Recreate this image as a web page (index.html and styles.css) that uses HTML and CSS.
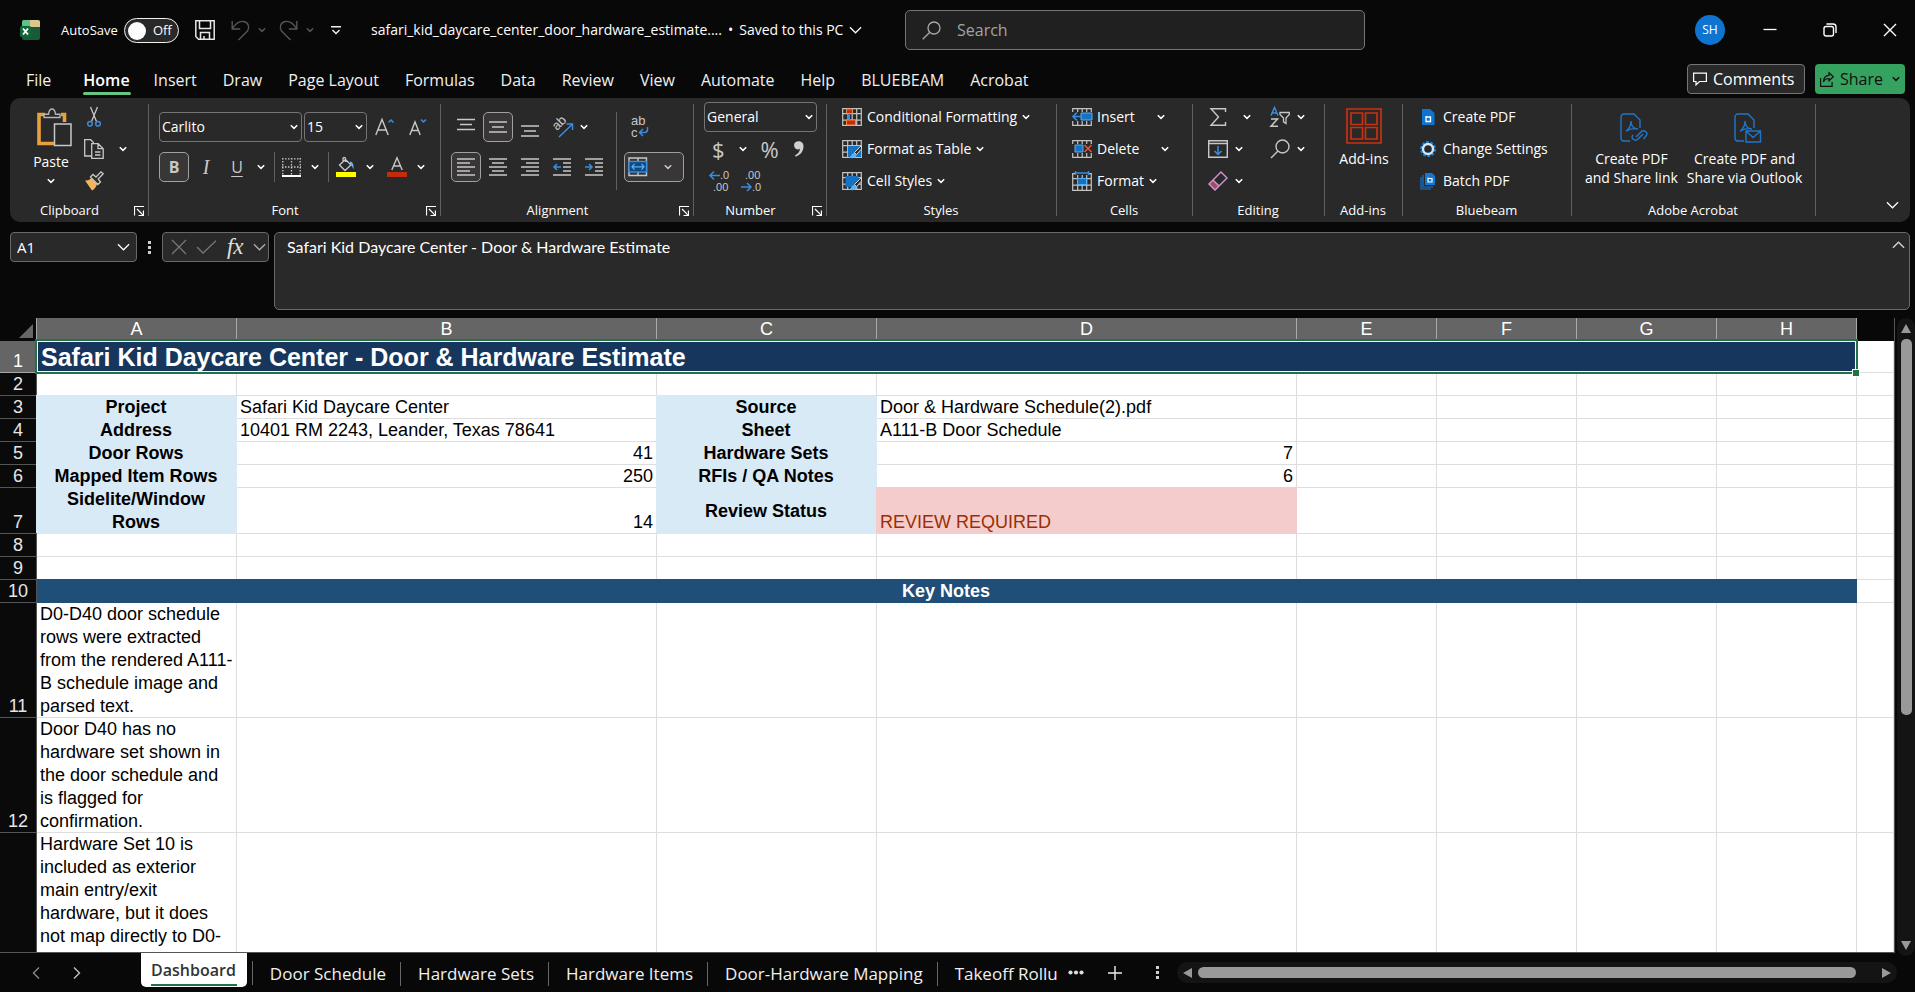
FILE: index.html
```html
<!DOCTYPE html>
<html lang="en">
<head>
<meta charset="utf-8">
<title>safari_kid_daycare_center_door_hardware_estimate</title>
<link rel="stylesheet" href="styles.css">
</head>
<body>
<svg class="defs" aria-hidden="true">
  <symbol id="chev" viewBox="0 0 8 6"><path d="M.8 1.2 4 4.4 7.2 1.2" fill="none" stroke="currentColor" stroke-width="1.5"/></symbol>
  <symbol id="chev-l" viewBox="0 0 14 8"><path d="M1 1l6 6 6-6" fill="none" stroke="currentColor" stroke-width="1.3"/></symbol>
  <symbol id="launch" viewBox="0 0 10 10"><path d="M.5 9.500V.5H10M3 3l6 6M9.400 4.500v5H4.500" fill="none" stroke="currentColor" stroke-width="1.200"/></symbol>
  <symbol id="grid" viewBox="0 0 20 18"><path d="M.7.7h18.600v16.600H.7zM.7 5.700h18.600M.7 12.200h18.600M5.700.7v16.600M10.200.7v16.600M14.700.7v16.600" fill="none" stroke="#c4c4c4" stroke-width="1.200"/></symbol>
  <symbol id="brush" viewBox="0 0 14 14"><path d="M13.500.5 6.500 7.500l2 2L13.500 4z" fill="#292929" stroke="#d6d6d6"/><path d="M6.300 8c-3 0-2.300 3.500-5.800 4.500 3 1.500 8 1 8-2.500z" fill="#5fb2f2"/></symbol>
  <symbol id="pdf" viewBox="0 0 24 30"><path d="M10 28H4a3 3 0 0 1-3-3V4a3 3 0 0 1 3-3h10l6 6v8M6 18c3-2 5-6 5-10 0 5 3 8 7 8-4-1-8 0-12 2z" fill="none" stroke="#2176c7" stroke-width="1.400"/></symbol>
</svg>

<header class="titlebar">
  <div class="title-left">
    <svg class="logo" width="20" height="20" viewBox="0 0 20 20"><rect x="2" width="18" height="20" rx="2" fill="#185c37"/><path d="M4 0h7v7H2V2a2 2 0 0 1 2-2z" fill="#5fc389"/><path d="M10 0h8a2 2 0 0 1 2 2v5H10z" fill="#d9c78c"/><rect y="6" width="11" height="11" rx="1.500" fill="#11673a"/><path d="M3 8.500l5 6M8 8.500l-5 6" stroke="#fff" stroke-width="1.900"/></svg>
    <label class="autosave" for="autosave">AutoSave</label>
    <span class="toggle"><input type="checkbox" id="autosave"><span class="toggle-text">Off</span></span>
    <button class="plain save" aria-label="Save"><svg width="20" height="20" viewBox="0 0 20 20"><path d="M.8.8h18.400v18.400H3.500L.8 16.500zM4.500.8v7.700h11V.8M5.500 19.200v-6.700h9v6.700M9 19v-3" fill="none" stroke="#e6e6e6" stroke-width="1.500"/></svg></button>
    <button class="plain dim undo" aria-label="Undo"><svg width="19" height="21" viewBox="0 0 19 21"><path d="M1.200 1v8h8M1.500 8.500C5 3 9 1 12.500 1.500c5 .8 6.500 6 4 9.500L7.500 20" fill="none" stroke="currentColor" stroke-width="1.400"/></svg><svg width="8" height="6"><use href="#chev"/></svg></button>
    <button class="plain dim redo" aria-label="Redo"><svg width="19" height="21" viewBox="0 0 19 21"><path d="M17.800 1v8h-8M17.500 8.500C14 3 10 1 6.500 1.500c-5 .8-6.500 6-4 9.500l9 9" fill="none" stroke="currentColor" stroke-width="1.400"/></svg><svg width="8" height="6"><use href="#chev"/></svg></button>
    <button class="plain custom" aria-label="Customize toolbar"><svg width="10" height="9" viewBox="0 0 10 9"><path d="M0 .8h10M1.500 4 5 7.500 8.500 4" fill="none" stroke="#f2f2f2" stroke-width="1.400"/></svg></button>
    <button class="plain filename"><span>safari_kid_daycare_center_door_hardware_estimate....</span><span>•</span><span>Saved to this PC</span><svg width="13" height="8"><use href="#chev-l"/></svg></button>
  </div>
  <label class="search"><svg width="19" height="19" viewBox="0 0 19 19"><circle cx="12" cy="7" r="6" fill="none" stroke="#a8a8a8" stroke-width="1.300"/><path d="M7.800 11.200.7 18.300" stroke="#a8a8a8" stroke-width="1.300"/></svg><input type="search" placeholder="Search" aria-label="Search"></label>
  <div class="title-right">
    <button class="plain avatar">SH</button>
    <button class="plain win" aria-label="Minimize"><svg width="14" height="14" viewBox="0 0 14 14"><path d="M.5 6.500h13" stroke="#fff" stroke-width="1.300"/></svg></button>
    <button class="plain win" aria-label="Restore"><svg width="14" height="14" viewBox="0 0 14 14"><rect x="1" y="3.500" width="9.500" height="9.500" rx="2" fill="none" stroke="#fff" stroke-width="1.400"/><path d="M3.500 1h6.500a3 3 0 0 1 3 3v6" fill="none" stroke="#fff" stroke-width="1.400"/></svg></button>
    <button class="plain win" aria-label="Close"><svg width="14" height="14" viewBox="0 0 14 14"><path d="M1 1l12 12M13 1 1 13" stroke="#fff" stroke-width="1.400"/></svg></button>
  </div>
</header>

<nav class="tabs">
  <button>File</button><button class="on">Home</button><button>Insert</button><button>Draw</button><button>Page Layout</button><button>Formulas</button><button>Data</button><button>Review</button><button>View</button><button>Automate</button><button>Help</button><button>BLUEBEAM</button><button>Acrobat</button>
  <div class="tab-actions">
    <button class="comments"><svg width="14" height="14" viewBox="0 0 14 14"><path d="M.6 1.200h12.800v8.300H6.500L3 12.800V9.500H.6z" fill="none" stroke="#fff" stroke-width="1.200"/></svg>Comments</button>
    <button class="share"><svg width="14" height="15" viewBox="0 0 14 15"><path d="M.6 6v8.300h11.500V10M9 .8l4.300 4L9 8.800V6.500c-3 0-4.500 1-5.500 3.500C3.500 6 5.500 3.300 9 3.300z" fill="none" stroke="#111" stroke-width="1.200"/></svg>Share<svg width="8" height="6"><use href="#chev"/></svg></button>
  </div>
</nav>

<section class="ribbon">
  <div class="group g-clip">
    <div class="body">
      <button class="plain paste"><svg width="35" height="39" viewBox="0 0 35 39"><path d="M8 6.500H2v29h15M24 6.500h3.500V14" fill="none" stroke="#e9a13b" stroke-width="3.600"/><path d="M7 9.500V6.200h4.500C12 2.500 13.500 1 15 1s3 1.500 3.500 5.200H23v3.300z" fill="#292929" stroke="#b5b5b5" stroke-width="1.400"/><rect x="17.500" y="16" width="16.500" height="21.500" fill="#292929" stroke="#c8c8c8" stroke-width="1.500"/></svg><span>Paste</span><svg width="8" height="6"><use href="#chev"/></svg></button>
      <div class="rows">
        <button class="plain row" aria-label="Cut"><svg width="20" height="20" viewBox="0 0 20 20"><path d="M6.500 0l6 14.500M13.500 0l-6 14.500" stroke="#c8c8c8" stroke-width="1.300"/><g fill="none" stroke="#3a8de0" stroke-width="1.500"><circle cx="6" cy="16.800" r="2.300"/><circle cx="14" cy="16.800" r="2.300"/></g></svg></button>
        <button class="plain row copy" aria-label="Copy"><svg width="20" height="20" viewBox="0 0 20 20"><path d="M8 17H.7V.7h6l3 3M7.700 4.700h6.500l5 5v9.600H7.700zM14 4.700v5h5M11 13h5.500M11 16h5.500" fill="none" stroke="#c8c8c8" stroke-width="1.300"/></svg><svg width="8" height="6"><use href="#chev"/></svg></button>
        <button class="plain row" aria-label="Format painter"><svg width="20" height="20" viewBox="0 0 20 20"><path d="M1 9.500c3 .5 5-1 6-2.500l6 6c-1 3-2.500 5.500-5 6.500z" fill="#f2b45c"/><path d="M6.500 6 9 3.500l3 2.500L17 .8l2.200 2-5 5.200 2.300 3-2.700 2.500z" fill="#292929" stroke="#c8c8c8" stroke-width="1.300"/></svg></button>
      </div>
    </div>
    <div class="foot launch"><span>Clipboard</span><svg width="10" height="10"><use href="#launch"/></svg></div>
  </div>

  <div class="group g-font">
    <div class="body two">
      <div class="line">
        <span class="combo name"><select aria-label="Font"><option>Carlito</option></select><svg width="8" height="6"><use href="#chev"/></svg></span>
        <span class="combo size"><select aria-label="Font size"><option>15</option></select><svg width="8" height="6"><use href="#chev"/></svg></span>
        <button class="plain grow" aria-label="Increase font size"><svg width="20" height="18" viewBox="0 0 20 18"><path d="M.8 17 7 1.500 13.200 17M3 12h8" fill="none" stroke="#c8c8c8" stroke-width="1.400"/><path d="M13.500 4.500 16 2l2.500 2.500" fill="none" stroke="#3a8de0" stroke-width="1.500"/></svg></button>
        <button class="plain shrink" aria-label="Decrease font size"><svg width="18" height="18" viewBox="0 0 18 18"><path d="M.8 17 6 4l5.200 13M2.800 12.500h6.500" fill="none" stroke="#c8c8c8" stroke-width="1.400"/><path d="M12 1.500 14.500 4 17 1.500" fill="none" stroke="#3a8de0" stroke-width="1.500"/></svg></button>
      </div>
      <div class="line fmt">
        <button class="tool on b">B</button>
        <button class="tool i">I</button>
        <button class="tool u">U</button><svg class="c1" width="8" height="6"><use href="#chev"/></svg>
        <i class="vsep"></i>
        <button class="plain" aria-label="Borders"><svg width="19" height="19" viewBox="0 0 19 19"><path d="M.8 0v17M18.200 0v17M9.500 0v17M0 .8h19M0 9h19" stroke="#c8c8c8" stroke-width="1.300" stroke-dasharray="1.500 1.500"/><path d="M0 18h19" stroke="#fff" stroke-width="2"/></svg></button><svg class="c2" width="8" height="6"><use href="#chev"/></svg>
        <i class="vsep"></i>
        <button class="plain" aria-label="Fill color"><svg width="20" height="20" viewBox="0 0 20 20"><rect y="15" width="20" height="5" fill="#ff0"/><path d="M9.500 2.500 15 8l-6 5.500L3.500 8zM9.500 5V1.500C9.500 0 7 0 7 1.500V5" fill="none" stroke="#c8c8c8" stroke-width="1.300"/><path d="M14 4.500c3 .5 4 3.500 3.500 8-1-2-1-4-3.500-5z" fill="#6cb4f0"/></svg></button><svg class="c2" width="8" height="6"><use href="#chev"/></svg>
        <button class="plain fc" aria-label="Font color"><svg width="20" height="20" viewBox="0 0 20 20"><rect y="15" width="20" height="5" fill="#c42b0c"/><path d="M4.800 13 10 .8 15.200 13M6.500 9h7" fill="none" stroke="#c8c8c8" stroke-width="1.400"/></svg></button><svg class="c2" width="8" height="6"><use href="#chev"/></svg>
      </div>
    </div>
    <div class="foot launch"><span>Font</span><svg width="10" height="10"><use href="#launch"/></svg></div>
  </div>

  <div class="group g-align">
    <div class="body two">
      <div class="alignrow">
        <div class="alignset">
          <button class="tool" aria-label="Top align"><svg width="18" height="20" viewBox="0 0 18 20"><path d="M0 2.500h18M3 7.500h12M0 12.500h18" stroke="#c8c8c8" stroke-width="1.400"/></svg></button>
          <button class="tool on" aria-label="Middle align"><svg width="18" height="20" viewBox="0 0 18 20"><path d="M0 5h18M3 10h12M0 15h18" stroke="#c8c8c8" stroke-width="1.400"/></svg></button>
          <button class="tool" aria-label="Bottom align"><svg width="18" height="20" viewBox="0 0 18 20"><path d="M0 9h18M3 14h12M0 19h18" stroke="#c8c8c8" stroke-width="1.400"/></svg></button>
          <button class="tool" aria-label="Orientation"><svg width="26" height="26" viewBox="0 0 26 26"><text x="0" y="0" transform="translate(8 17) rotate(-45)" class="ab">ab</text><path d="M10 23 23 10.500M17.500 10h6v6" fill="none" stroke="#3a8de0" stroke-width="1.500"/></svg></button><svg class="c3" width="8" height="6"><use href="#chev"/></svg>
          <button class="tool on" aria-label="Align left"><svg width="18" height="18" viewBox="0 0 18 18"><path d="M0 1h18M0 5h13M0 9h18M0 13h13M0 17h18" stroke="#c8c8c8" stroke-width="1.400"/></svg></button>
          <button class="tool" aria-label="Center"><svg width="18" height="18" viewBox="0 0 18 18"><path d="M0 1h18M3 5h12M0 9h18M3 13h12M0 17h18" stroke="#c8c8c8" stroke-width="1.400"/></svg></button>
          <button class="tool" aria-label="Align right"><svg width="18" height="18" viewBox="0 0 18 18"><path d="M0 1h18M5 5h13M0 9h18M5 13h13M0 17h18" stroke="#c8c8c8" stroke-width="1.400"/></svg></button>
          <button class="tool" aria-label="Decrease indent"><svg width="18" height="18" viewBox="0 0 18 18"><path d="M0 1h18M10 5h8M10 9h8M10 13h8M0 17h18" stroke="#c8c8c8" stroke-width="1.400"/><path d="M8 9H1M4 6 1 9l3 3" fill="none" stroke="#3a8de0" stroke-width="1.500"/></svg></button>
          <button class="tool" aria-label="Increase indent"><svg width="18" height="18" viewBox="0 0 18 18"><path d="M0 1h18M10 5h8M10 9h8M10 13h8M0 17h18" stroke="#c8c8c8" stroke-width="1.400"/><path d="M0 9h7M4 6l3 3-3 3" fill="none" stroke="#3a8de0" stroke-width="1.500"/></svg></button>
        </div>
        <i class="vsep tall"></i>
        <div class="wrapset">
          <button class="tool" aria-label="Wrap text"><svg width="20" height="26" viewBox="0 0 20 26"><text x="2" y="11" class="ab">ab</text><text x="2" y="23" class="ab">c</text><path d="M18.500 13v2.500c0 2-1 3-3 3h-5M14 15l-3.500 3.500L14 22" fill="none" stroke="#3a8de0" stroke-width="1.500"/></svg></button>
          <button class="tool on merge" aria-label="Merge and center"><svg width="20" height="20" viewBox="0 0 20 20"><path d="M1 1h17.500v17.500H1zM10 1v4M10 15v4" fill="none" stroke="#c8c8c8" stroke-width="1.400"/><rect x="1" y="4.500" width="17.500" height="10.500" fill="#10497e" stroke="#3a8de0" stroke-width="1.400"/><path d="M4 9.800h12M6.500 7 4 9.800l2.500 2.800M13.500 7 16 9.800l-2.500 2.800" fill="none" stroke="#58aef5" stroke-width="1.300"/></svg><svg width="8" height="6"><use href="#chev"/></svg></button>
        </div>
      </div>
    </div>
    <div class="foot launch"><span>Alignment</span><svg width="10" height="10"><use href="#launch"/></svg></div>
  </div>

  <div class="group g-num">
    <div class="rows">
      <div class="row"><span class="combo num"><select aria-label="Number format"><option>General</option></select><svg width="8" height="6"><use href="#chev"/></svg></span></div>
      <div class="row nums"><button class="plain glyph">$</button><svg width="8" height="6"><use href="#chev"/></svg><button class="plain glyph">%</button><button class="plain" aria-label="Comma style"><svg width="12" height="18" viewBox="0 0 12 18"><path d="M10.500 6C10.500-.5 1 0 1 5c0 4.500 5 5.500 6 3.500 0 3-2 5-5 7l.8 1.200C8 14.500 10.500 11 10.500 6z" fill="#d0d0d0"/></svg></button></div>
      <div class="row decs"><button class="plain" aria-label="Increase decimal"><svg width="21" height="26" viewBox="0 0 21 26"><text x="11" y="11" class="dec">.0</text><text x="4" y="23" class="dec">.00</text><path d="M11 7.500H1M5 3.500l-4 4 4 4" fill="none" stroke="#3a8de0" stroke-width="1.500"/></svg></button><button class="plain" aria-label="Decrease decimal"><svg width="21" height="26" viewBox="0 0 21 26"><text x="4" y="11" class="dec">.00</text><text x="11" y="23" class="dec">.0</text><path d="M0 19h10M6 15l4 4-4 4" fill="none" stroke="#3a8de0" stroke-width="1.500"/></svg></button></div>
    </div>
    <div class="foot launch"><span>Number</span><svg width="10" height="10"><use href="#launch"/></svg></div>
  </div>

  <div class="group g-styles">
    <div class="rows">
      <button class="plain row cmd"><svg width="20" height="18" viewBox="0 0 20 18"><use href="#grid"/><path d="M4.500 1h6v4.500h-6zM4.500 12h9v5h-9z" fill="#c42b0c" stroke="#f08a4b"/><path d="M5 6.500h3v5H5z" fill="#3a8de0"/></svg><span>Conditional Formatting</span><svg width="8" height="6"><use href="#chev"/></svg></button>
      <button class="plain row cmd"><svg width="20" height="19" viewBox="0 0 20 19"><use href="#grid" height="18"/><path d="M6 6h13v11H6z" fill="#1673c4"/><use href="#brush" x="6" y="5" width="14" height="14"/></svg><span>Format as Table</span><svg width="8" height="6"><use href="#chev"/></svg></button>
      <button class="plain row cmd"><svg width="20" height="19" viewBox="0 0 20 19"><use href="#grid" height="18"/><path d="M3.500 4h13v11h-13z" fill="#1673c4"/><use href="#brush" x="6" y="5" width="14" height="14"/></svg><span>Cell Styles</span><svg width="8" height="6"><use href="#chev"/></svg></button>
    </div>
    <div class="foot"><span>Styles</span></div>
  </div>

  <div class="group g-cells">
    <div class="rows">
      <button class="plain row cmd split"><svg width="20" height="18" viewBox="0 0 20 18"><use href="#grid"/><path d="M0 4h20v9H0z" fill="#292929"/><path d="M9 5h11v7H9z" fill="#1673c4" stroke="#58aef5"/><path d="M9 8.500H1M5 4.500l-4 4 4 4" fill="none" stroke="#3a8de0" stroke-width="1.600"/></svg><span>Insert</span><svg width="8" height="6"><use href="#chev"/></svg></button>
      <button class="plain row cmd split"><svg width="20" height="18" viewBox="0 0 20 18"><use href="#grid"/><path d="M0 4h20v9H0z" fill="#292929"/><path d="M3 5h8v7H3z" fill="#1673c4" stroke="#58aef5"/><path d="M12.500 5l7 7M19.500 5l-7 7" stroke="#e8532b" stroke-width="1.700"/></svg><span>Delete</span><svg width="8" height="6"><use href="#chev"/></svg></button>
      <button class="plain row cmd"><svg width="20" height="20" viewBox="0 0 20 20"><use href="#grid" y="2" height="18"/><path d="M3 0h14v4H3z" fill="#292929"/><path d="M5.500 7.500h9v6h-9z" fill="#1673c4" stroke="#58aef5"/><path d="M3.500 0v4M16.500 0v4M3.500 2h13" stroke="#3a8de0" stroke-width="1.400"/></svg><span>Format</span><svg width="8" height="6"><use href="#chev"/></svg></button>
    </div>
    <div class="foot"><span>Cells</span></div>
  </div>

  <div class="group g-edit">
    <div class="editcols">
      <div class="rows">
        <button class="plain row sum" aria-label="AutoSum"><svg width="20" height="18" viewBox="0 0 20 18"><path d="M17.500 4V.8H3L10.500 9 3 17.200h14.500V14" fill="none" stroke="#c8c8c8" stroke-width="1.400"/></svg><svg width="8" height="6"><use href="#chev"/></svg></button>
        <button class="plain row" aria-label="Fill"><svg width="20" height="18" viewBox="0 0 20 18"><path d="M.7.7h18.600v16.600H.7zM.7 3.500h18.600" fill="none" stroke="#c8c8c8" stroke-width="1.400"/><path d="M10 6v8.500M6.500 11l3.500 3.500 3.500-3.500" fill="none" stroke="#3a8de0" stroke-width="1.500"/></svg><svg width="8" height="6"><use href="#chev"/></svg></button>
        <button class="plain row" aria-label="Clear"><svg width="20" height="20" viewBox="0 0 20 20"><path d="M1 13.500 5.500 9l6 6L7 19.500z" fill="#9c4f5e"/><path d="M13 1 19 7 7 19 1 13zM5 9l6 6" fill="none" stroke="#d596d5" stroke-width="1.400"/></svg><svg width="8" height="6"><use href="#chev"/></svg></button>
      </div>
      <div class="rows">
        <button class="plain row" aria-label="Sort and filter"><svg width="20" height="20" viewBox="0 0 20 20"><path d="M1 8.500 4.500.5 8 8.500M2.300 6h4.500" fill="none" stroke="#3a8de0" stroke-width="1.500"/><path d="M1 12h6.500L1 19.200h7" fill="none" stroke="#c8c8c8" stroke-width="1.500"/><path d="M10 5.500h9.300v2L16 11v5.500l-2.500-1.700V11L10 7.500z" fill="none" stroke="#c8c8c8" stroke-width="1.300"/></svg><svg width="8" height="6"><use href="#chev"/></svg></button>
        <button class="plain row" aria-label="Find and select"><svg width="20" height="20" viewBox="0 0 20 20"><circle cx="12.500" cy="7.500" r="6.500" fill="none" stroke="#c8c8c8" stroke-width="1.400"/><path d="M8 12 1 19" stroke="#c8c8c8" stroke-width="1.400"/></svg><svg width="8" height="6"><use href="#chev"/></svg></button>
      </div>
    </div>
    <div class="foot"><span>Editing</span></div>
  </div>

  <div class="group g-add">
    <button class="plain big"><svg width="36" height="36" viewBox="0 0 36 36"><path d="M1 1h34v34H1zM5 5h11.500v11.500H5zM19.500 5H31v11.500H19.500zM5 19.500h11.500V31H5zM19.500 19.500H31V31H19.500z" fill="none" stroke="#c9300f" stroke-width="1.700"/></svg><span>Add-ins</span></button>
    <div class="foot"><span>Add-ins</span></div>
  </div>

  <div class="group g-blue">
    <div class="rows">
      <button class="plain row cmd"><svg width="16" height="18" viewBox="0 0 16 18"><path d="M2 1h8l4.500 4v12H2z" fill="#0f74d0"/><path d="M6 8v5.500h4.500V9H6z" fill="none" stroke="#fff" stroke-width="1.300"/></svg><span>Create PDF</span></button>
      <button class="plain row cmd"><svg width="16" height="18" viewBox="0 0 16 18"><circle cx="8" cy="9" r="7" fill="none" stroke="#1883e0" stroke-width="2" stroke-dasharray="2.800 1.600"/><circle cx="8" cy="9" r="5" fill="none" stroke="#cfe6fb" stroke-width="2.400"/></svg><span>Change Settings</span></button>
      <button class="plain row cmd"><svg width="16" height="18" viewBox="0 0 16 18"><path d="M5 1h7l3 3v9H5z" fill="#1278d4"/><path d="M3 3v12h10M1 5v12h10" fill="none" stroke="#1278d4" stroke-width="1.200"/><path d="M8 5.500V10h4V6.500H8z" fill="none" stroke="#fff" stroke-width="1.200"/></svg><span>Batch PDF</span></button>
    </div>
    <div class="foot"><span>Bluebeam</span></div>
  </div>

  <div class="group g-acro">
    <div class="body acro">
      <button class="plain big"><svg width="28" height="30" viewBox="0 0 28 30"><use href="#pdf" width="24" height="30"/><path d="M15 22l5-5c3-3 8 1 5 4l-2.500 3M22 19l-5 5c-3 3-8-1-5-4" transform="translate(1 2)" fill="none" stroke="#2176c7" stroke-width="1.500"/></svg><span>Create PDF<br>and Share link</span></button>
      <button class="plain big"><svg width="28" height="30" viewBox="0 0 28 30"><use href="#pdf" width="24" height="30"/><path d="M12 18h14.500v11H12zM12 18l7 6.500 7.500-6.500" fill="#292929" stroke="#2176c7" stroke-width="1.400"/></svg><span>Create PDF and<br>Share via Outlook</span></button>
    </div>
    <div class="foot"><span>Adobe Acrobat</span></div>
  </div>
  <button class="plain collapse" aria-label="Collapse ribbon"><svg width="13" height="8"><use href="#chev-l"/></svg></button>
</section>

<section class="formula">
  <label class="namebox"><input type="text" value="A1" aria-label="Name box"><svg width="13" height="8"><use href="#chev-l"/></svg></label>
  <span class="dots3"></span>
  <div class="fxbox">
    <button class="plain dim2" aria-label="Cancel"><svg width="16" height="16" viewBox="0 0 16 16"><path d="M1 1l14 14M15 1 1 15" stroke="currentColor" stroke-width="1.300"/></svg></button>
    <button class="plain dim2" aria-label="Enter"><svg width="21" height="14" viewBox="0 0 21 14"><path d="M1 7l6 6L20 .8" fill="none" stroke="currentColor" stroke-width="1.300"/></svg></button>
    <button class="plain fx">fx</button>
    <svg width="13" height="8"><use href="#chev-l"/></svg>
  </div>
  <div class="fbar"><textarea aria-label="Formula bar">Safari Kid Daycare Center - Door &amp; Hardware Estimate</textarea><svg width="13" height="8" viewBox="0 0 14 8"><path d="M1 7l6-6 6 6" fill="none" stroke="#d0d0d0" stroke-width="1.500"/></svg></div>
</section>

<main class="work">
  <div class="sheet">
    <table>
      <colgroup><col class="c-row"><col class="c-a"><col class="c-wide"><col class="c-c"><col class="c-wide"><col class="c-n"><col class="c-n"><col class="c-n"><col class="c-n"><col></colgroup>
      <thead><tr><th class="corner"><svg width="14" height="14" viewBox="0 0 14 14"><path d="M14 0v14H0z" fill="#666"/></svg></th><th>A</th><th>B</th><th>C</th><th>D</th><th>E</th><th>F</th><th>G</th><th>H</th><th class="out"></th></tr></thead>
      <tbody>
        <tr class="r1"><th class="sel">1</th><td class="title" colspan="8">Safari Kid Daycare Center - Door &amp; Hardware Estimate<span class="frame"></span><span class="handle"></span></td><td></td></tr>
        <tr><th>2</th><td></td><td></td><td></td><td></td><td></td><td></td><td></td><td></td><td></td></tr>
        <tr><th>3</th><td class="lab">Project</td><td>Safari Kid Daycare Center</td><td class="lab">Source</td><td>Door &amp; Hardware Schedule(2).pdf</td><td></td><td></td><td></td><td></td><td></td></tr>
        <tr><th>4</th><td class="lab">Address</td><td>10401 RM 2243, Leander, Texas 78641</td><td class="lab">Sheet</td><td>A111-B Door Schedule</td><td></td><td></td><td></td><td></td><td></td></tr>
        <tr><th>5</th><td class="lab">Door Rows</td><td class="n">41</td><td class="lab">Hardware Sets</td><td class="n">7</td><td></td><td></td><td></td><td></td><td></td></tr>
        <tr><th>6</th><td class="lab">Mapped Item Rows</td><td class="n">250</td><td class="lab">RFIs / QA Notes</td><td class="n">6</td><td></td><td></td><td></td><td></td><td></td></tr>
        <tr><th>7</th><td class="lab">Sidelite/Window<br>Rows</td><td class="n">14</td><td class="lab">Review Status</td><td class="warn">REVIEW REQUIRED</td><td></td><td></td><td></td><td></td><td></td></tr>
        <tr><th>8</th><td></td><td></td><td></td><td></td><td></td><td></td><td></td><td></td><td></td></tr>
        <tr><th>9</th><td></td><td></td><td></td><td></td><td></td><td></td><td></td><td></td><td></td></tr>
        <tr><th>10</th><td class="key" colspan="8">Key Notes</td><td></td></tr>
        <tr><th>11</th><td>D0-D40 door schedule rows were extracted from the rendered A111-B schedule image and parsed text.</td><td></td><td></td><td></td><td></td><td></td><td></td><td></td><td></td></tr>
        <tr><th>12</th><td>Door D40 has no hardware set shown in the door schedule and is flagged for confirmation.</td><td></td><td></td><td></td><td></td><td></td><td></td><td></td><td></td></tr>
        <tr class="r13"><th></th><td>Hardware Set 10 is included as exterior main entry/exit hardware, but it does not map directly to D0-</td><td></td><td></td><td></td><td></td><td></td><td></td><td></td><td></td></tr>
      </tbody>
    </table>
  </div>
  <div class="vscroll"><i class="arr up"></i><i class="thumb"></i><i class="arr down"></i></div>
</main>

<footer class="bottom">
  <div class="sheetnav">
    <button class="plain dimnav" aria-label="Previous sheet"><svg width="8" height="12" viewBox="0 0 8 12"><path d="M7 .5 1.500 6 7 11.500" fill="none" stroke="currentColor" stroke-width="1.400"/></svg></button>
    <button class="plain" aria-label="Next sheet"><svg width="8" height="12" viewBox="0 0 8 12"><path d="M1 .5 6.500 6 1 11.500" fill="none" stroke="currentColor" stroke-width="1.400"/></svg></button>
  </div>
  <button class="stab active"><span>Dashboard</span></button>
  <button class="stab">Door Schedule</button>
  <button class="stab">Hardware Sets</button>
  <button class="stab">Hardware Items</button>
  <button class="stab">Door-Hardware Mapping</button>
  <button class="stab last">Takeoff Rollu</button>
  <button class="plain more" aria-label="More sheets"><svg width="16" height="5" viewBox="0 0 16 5"><g fill="#ddd"><circle cx="2.500" cy="2.500" r="2.100"/><circle cx="8" cy="2.500" r="2.100"/><circle cx="13.500" cy="2.500" r="2.100"/></g></svg></button>
  <button class="plain plus" aria-label="New sheet"><svg width="14" height="14" viewBox="0 0 14 14"><path d="M7 0v14M0 7h14" stroke="#eee" stroke-width="1.400"/></svg></button>
  <span class="dots3"></span>
  <div class="hscroll"><i class="arr left"></i><i class="thumb"></i><i class="arr right"></i></div>
</footer>
</body>
</html>
```
FILE: styles.css
```css
* { box-sizing: border-box; }
html, body { height: 100%; }
body {
  margin: 0;
  display: flex;
  flex-direction: column;
  overflow: hidden;
  background: #080808;
  color: #fff;
  font: 14px/20px "Open Sans", "Noto Sans", sans-serif;
}
button, input, select, textarea { font: inherit; color: inherit; }
button { white-space: nowrap; }
svg { display: block; flex: none; overflow: visible; }
.defs { position: absolute; width: 0; height: 0; }
.plain { background: none; border: 0; padding: 0; display: flex; align-items: center; }

/* title bar */
.titlebar { display: flex; height: 60px; flex: none; align-items: center; }
.title-left { flex: 0 0 905px; display: flex; align-items: center; padding-left: 20px; }
.autosave { margin-left: 21px; width: 63px; font-size: 13px; }
.toggle { position: relative; display: flex; width: 55px; height: 25px; }
.toggle input { appearance: none; margin: 0; width: 55px; height: 25px; border: 1px solid #f0f0f0; border-radius: 13px; background: #292929; }
.toggle input::before { content: ""; display: block; width: 18px; height: 18px; margin: 3px; border-radius: 50%; background: #fff; }
.toggle-text { position: absolute; left: 29px; top: 2px; font-size: 13px; pointer-events: none; }
.save { margin-left: 16px; }
.undo { margin-left: 16px; gap: 8px; }
.redo { margin-left: 13px; gap: 8px; }
.dim { color: #555; }
.custom { margin-left: 17px; }
.filename { margin-left: 30px; gap: 6px; }
.search { flex: 0 1 460px; height: 40px; display: flex; align-items: center; gap: 16px; padding: 0 16px; background: #202020; border: 1px solid #757575; border-radius: 5px; }
.search input { flex: 1; min-width: 0; background: none; border: 0; padding: 0; font-size: 16px; outline: 0; }
.search input::placeholder { color: #a3a3a3; opacity: 1; }
.title-right { flex: 1; display: flex; justify-content: flex-end; align-items: center; }
.avatar { width: 30px; height: 30px; border-radius: 50%; background: #0f74d0; justify-content: center; font-size: 12px; margin-right: 15px; }
.win { width: 60px; justify-content: center; }
.win:last-child { margin-right: -5px; }

/* ribbon tabs */
.tabs { flex: none; display: flex; gap: 2px; height: 38px; padding: 3px 10px 2px 14px; }
.tabs > button { position: relative; background: none; border: 0; padding: 0 12px; font-size: 16px; color: #f0f0f0; }
.tabs > button:first-child { margin-right: 6px; }
.tabs > .on { font-weight: 600; color: #fff; margin-right: -2px; }
.tabs > .on::after { content: ""; position: absolute; left: 12px; right: 11px; bottom: 1px; height: 3px; border-radius: 2px; background: #66c583; }
.tab-actions { margin-left: auto; display: flex; gap: 10px; }
.tab-actions button { height: 30px; border-radius: 4px; display: flex; align-items: center; font-size: 16px; gap: 6px; margin-top: 1px; }
.comments { width: 118px; background: #292929; border: 1px solid #757575; padding: 0 5px; }
.share { width: 90px; background: #36a25f; border: 0; padding: 0 5px; color: #111; }
.share svg:last-child { margin-left: auto; }

/* ribbon */
.ribbon { flex: none; display: flex; height: 124px; margin: 0 5px 0 10px; background: #292929; border-radius: 10px; position: relative; }
.group { position: relative; display: flex; flex-direction: column; flex: none; padding-top: 3px; }
.group::after { content: ""; position: absolute; right: 0; top: 6px; bottom: 6px; width: 1px; background: #606060; }
.foot { height: 25px; margin-top: auto; display: flex; align-items: center; justify-content: center; font-size: 13px; padding: 0 2px 0 0; position: relative; }
.foot.launch { padding-right: 20px; }
.foot svg { position: absolute; right: 5px; top: 9px; }
.body { display: flex; height: 96px; }
.rows { display: flex; flex-direction: column; }
.row { height: 32px; display: flex; align-items: center; }
.g-clip { width: 139px; }
.g-clip .body { padding-left: 20px; }
.paste { flex-direction: column; width: 42px; padding-top: 7px; margin-right: 12px; }
.paste span { margin: 5px 0 6px; }
.paste > svg:first-child { margin-left: 6px; }
.copy { gap: 15px; }
.g-font { width: 292px; }
.two { flex-direction: column; gap: 10px; padding: 11px 0 0 10px; }
.line { display: flex; align-items: center; height: 30px; }
.combo { position: relative; display: flex; height: 30px; }
.combo select { appearance: none; width: 100%; background: #292929; border: 1px solid #757575; border-radius: 4px; padding: 0 2px; }
.combo svg { position: absolute; right: 4px; top: 12px; pointer-events: none; }
.name { width: 143px; }
.size { width: 63px; margin-left: 2px; }
.grow { margin-left: 8px; }
.shrink { margin-left: 14px; }
.tool { flex: none; width: 30px; height: 30px; padding: 0; display: flex; align-items: center; justify-content: center; background: none; border: 1px solid transparent; border-radius: 5px; color: #c8c8c8; font-size: 16px; }
.tool.on { background: #383636; border-color: #a0a0a0; }
.b { font-weight: 700; }
.i { font-family: "Liberation Serif", serif; font-style: italic; font-size: 20px; margin-left: 2px; }
.u { text-decoration: underline; text-underline-offset: 3px; margin-left: 1px; }
.c1 { margin-left: 5px; }
.c2 { margin-left: 10px; }
.fc { margin-left: 13px; }
.vsep { width: 1px; height: 30px; background: #606060; margin: 0 7px 0 9px; }
.tall { height: 78px; margin: 0 7px; }
.g-align { width: 253px; }
.alignrow { display: flex; }
.alignset { display: grid; grid-template-columns: repeat(5, 30px); gap: 10px 2px; align-items: center; align-content: start; }
.c3 { margin-left: 1px; }
.wrapset { display: flex; flex-direction: column; gap: 10px; }
.merge { width: 60px; justify-content: space-between; padding: 0 11px 0 3px; }
.ab { font: 13px "Liberation Sans", sans-serif; fill: #c8c8c8; }
.dec { font: 11px "Liberation Sans", sans-serif; fill: #c8c8c8; }
.g-num { width: 133px; }
.g-num .rows { padding-left: 10px; }
.num { width: 113px; }
.nums { gap: 14px; padding-left: 8px; }
.glyph { color: #c8c8c8; font-size: 22px; }
.decs { gap: 11px; padding-left: 5px; }
.g-styles { width: 230px; }
.g-styles .rows, .g-cells .rows { padding-left: 15px; }
.cmd { gap: 5px; }
.split svg:last-child { margin-left: 17px; }
.g-cells { width: 136px; }
.g-edit { width: 132px; }
.editcols { display: flex; padding-left: 15px; gap: 27px; }
.editcols .row { gap: 7px; }
.editcols .sum { gap: 15px; margin-right: -8px; }
.g-add { width: 78px; }
.big { flex-direction: column; text-align: center; line-height: 19px; padding-top: 7px; }
.big span { margin-top: 5px; }
.g-blue { width: 169px; }
.g-blue .rows { padding-left: 17px; }
.g-blue .cmd { gap: 7px; }
.g-acro { width: 244px; }
.acro { padding: 5px 0 0 13px; gap: 9px; }
.acro .big svg { margin-left: 6px; }
.acro .big span { margin-top: 6px; }
.collapse { position: absolute; right: 11px; bottom: 13px; }

/* formula bar */
.formula { flex: none; display: flex; align-items: flex-start; padding: 10px 5px 8px 10px; }
.namebox, .fxbox { height: 30px; display: flex; align-items: center; border: 1px solid #696969; border-radius: 4px; background: #292929; }
.namebox { width: 127px; padding: 0 6px; }
.namebox input { width: 100%; min-width: 0; border: 0; background: none; padding: 0; outline: 0; font-size: 15px; }
.dots3 { flex: none; width: 3px; height: 13px; background: repeating-linear-gradient(#d0d0d0 0 3px, transparent 3px 5px); }
.formula .dots3 { margin: 9px 11px 0; }
.fxbox { width: 107px; padding: 0 2px 0 8px; justify-content: space-between; color: #b0b0b0; }
.dim2 { color: #777; }
.fx { font: italic 23px/24px "Liberation Serif", serif; color: #e0e0e0; }
.fbar { position: relative; flex: 1; margin-left: 5px; height: 78px; }
.fbar textarea { display: block; width: 100%; height: 100%; resize: none; background: #292929; border: 1px solid #696969; border-radius: 5px; padding: 4px 12px; outline: 0; font-family: Lato, sans-serif; font-size: 16px; }
.fbar svg { position: absolute; right: 5px; top: 9px; }

/* worksheet */
.work { flex: 1; min-height: 0; display: flex; }
.sheet { flex: 1; min-width: 0; overflow: hidden; background: #fff; border-right: 1px solid #555; border-bottom: 1px solid #555; }
table { table-layout: fixed; width: 100%; border-collapse: separate; border-spacing: 0; font: 18px/23px "Liberation Sans", Arial, sans-serif; color: #000; }
.c-row { width: 37px; }
.c-a { width: 200px; }
.c-wide { width: 420px; }
.c-c { width: 220px; }
.c-n { width: 140px; }
th, td { padding: 0; height: 23px; }
thead th { background: #656565; color: #fff; font-weight: 400; padding-right: 1px; box-shadow: inset -1px 0 #a8a8a8; }
thead th.corner { background: #080808; vertical-align: middle; }
.corner svg { margin: 2px 0 0 19px; }
thead th.out { background: #080808; box-shadow: none; }
tbody th { background: #0a0a0a; color: #e6e6e6; font-weight: 400; vertical-align: bottom; padding-right: 1px; box-shadow: inset -1px -1px #555; }
tbody th.sel { background: #656565; color: #fff; box-shadow: inset -1px -1px #a8a8a8; }
td { padding: 0 3px; vertical-align: bottom; box-shadow: inset -1px -1px #dedede; }
.r1 td, .r1 th { height: 32px; }
.r13 td { height: 138px; vertical-align: top; }
td.title { position: relative; background: #17365d; color: #fff; font-weight: 700; font-size: 25px; line-height: 32px; padding-left: 4px; box-shadow: none; }
.frame { position: absolute; inset: -2px -1px -1px -2px; border: 2px solid #217346; box-shadow: inset 0 0 0 1px #fff; }
.handle { position: absolute; right: -2px; bottom: -3px; width: 6px; height: 6px; background: #217346; outline: 1px solid #fff; }
td.lab { background: #d9eaf7; font-weight: 700; text-align: center; vertical-align: middle; padding: 0 5px 0 3px; box-shadow: -1px -1px #d9eaf7; }
td.n { text-align: right; padding-right: 4px; }
.warn { background: #f4cccc; color: #9c2f00; box-shadow: -1px -1px #f4cccc; }
td.key { background: #1f4e78; color: #fff; font-weight: 700; text-align: center; padding-right: 5px; box-shadow: 0 -1px #1f4e78; }
.vscroll { flex: none; width: 18px; margin-left: 2px; margin-bottom: -3px; background: #141414; border-radius: 9px; display: flex; flex-direction: column; align-items: center; padding: 6px 0; }
.vscroll .thumb { width: 11px; flex: 0 0 60%; margin-top: 6px; border-radius: 5px; background: #999; }
.arr { width: 0; height: 0; border: 5px solid transparent; flex: none; }
.up { border-top: 0; border-bottom: 9px solid #999; }
.down { margin-top: auto; border-bottom: 0; border-top: 9px solid #999; }

/* sheet tabs */
.bottom { flex: none; height: 39px; display: flex; align-items: center; padding-right: 18px; }
.sheetnav { flex: none; width: 141px; display: flex; gap: 33px; padding-left: 32px; color: #c0c0c0; }
.dimnav { color: #888; }
.stab { position: relative; flex: none; background: none; border: 0; padding: 2px 15px 0 17px; font-size: 17px; color: #f0f0f0; }
.stab::after { content: ""; position: absolute; right: 0; top: 0; width: 1px; height: 24px; background: #666; }
.stab.last { padding-right: 10px; }
.stab.last::after { display: none; }
.stab.active { align-self: flex-start; height: 34px; margin-right: 6px; padding: 0 10px; background: #fff; color: #333; border-radius: 0 0 5px 5px; font-weight: 600; font-size: 16px; }
.stab.active::after { right: -6px; top: 8px; }
.stab.active span { display: block; height: 32px; line-height: 32px; padding: 0 1px 0 0; box-shadow: inset 0 -2px #217346; }
.plus { margin: 0 34px 0 24px; }
.hscroll { flex: 1; height: 21px; margin-left: 18px; display: flex; align-items: center; padding: 0 6px; border-radius: 11px; background: #141414; }
.hscroll .thumb { height: 11px; flex: 1; margin: 0 26px 0 6px; border-radius: 6px; background: #999; }
.left { border-left: 0; border-right: 9px solid #999; }
.right { border-right: 0; border-left: 9px solid #999; }
```
